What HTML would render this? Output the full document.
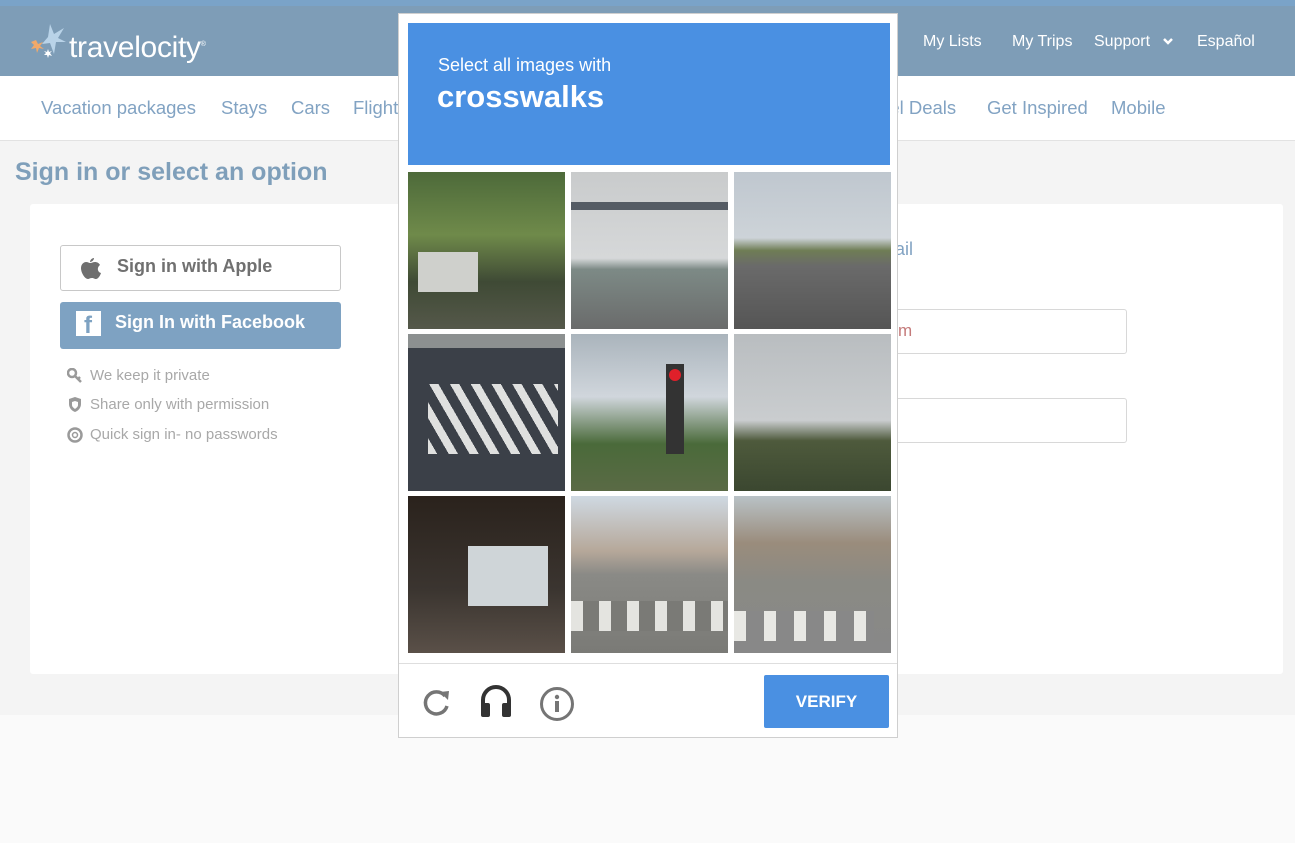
<!DOCTYPE html>
<html><head><meta charset="utf-8"><style>
*{margin:0;padding:0;box-sizing:border-box}
body{width:1295px;height:843px;overflow:hidden;background:#fafafa;font-family:"Liberation Sans",Arial,sans-serif;position:relative}
.a{position:absolute}
.top{left:0;top:0;width:1295px;height:6px;background:#7aa3c8}
.hdr{left:0;top:6px;width:1295px;height:70px;background:#7e9db7}
.nav{left:0;top:76px;width:1295px;height:65px;background:#fff;border-bottom:1px solid #e2e2e2}
.nav span{position:absolute;top:21px;font-size:18.5px;color:#82a3c3}
.hl{color:#fff;font-size:16px;top:33px}
.gray{left:0;top:141px;width:1295px;height:574px;background:#f4f4f4}
.card{left:30px;top:204px;width:1253px;height:470px;background:#fff;border-radius:3px}
.btn{border-radius:3px;font-size:18px;font-weight:bold}
.perk{font-size:15px;color:#a8a8a8;left:90px}
.inp{border:1px solid #d8d8d8;border-radius:3px;background:#fff}
.cap{left:398px;top:13px;width:500px;height:725px;background:#fff;border:1px solid #cfcfcf}
.t{position:absolute;width:157px;height:157px;overflow:hidden}
</style></head><body>
<div class="a top"></div>
<div class="a hdr"></div>
<svg class="a" style="left:28px;top:22px" width="45" height="42" viewBox="0 0 45 42">
<path d="M22 2 L26 12 L36 6 L30 16 L38 20 L28 20 L26 32 L22 21 L14 22 L20 15 Z" fill="#b9d3e8"/>
<path d="M8 18 L10 22 L15 20 L12 24 L16 27 L11 26 L9 31 L8 26 L3 27 L6 23 L3 20 Z" fill="#f1a96a"/>
<path d="M20 27 L21 30 L24 29 L22 31 L24 34 L21 33 L20 36 L19 33 L16 33 L18 31 L16 29 L19 30Z" fill="#fff"/>
</svg>
<div class="a" style="left:69px;top:31px;font-size:30px;color:#fff;letter-spacing:-0.3px">travelocity<sup style="font-size:7px">®</sup></div>
<div class="a hl" style="left:923px">My Lists</div>
<div class="a hl" style="left:1012px">My Trips</div>
<div class="a hl" style="left:1094px">Support</div>
<svg class="a" style="left:1162px;top:37px" width="12" height="9"><path d="M2 2 L6 6 L10 2" stroke="#fff" stroke-width="2.5" fill="none"/></svg>
<div class="a hl" style="left:1197px">Español</div>
<div class="a nav">
<span style="left:41px">Vacation packages</span><span style="left:221px">Stays</span><span style="left:291px">Cars</span><span style="left:353px">Flights</span><span style="left:853px">Travel Deals</span><span style="left:987px">Get Inspired</span><span style="left:1111px">Mobile</span>
</div>
<div class="a gray"></div>
<div class="a" style="left:15px;top:158px;font-size:25px;font-weight:bold;color:#7f9fba">Sign in or select an option</div>
<div class="a card"></div>
<div class="a btn" style="left:60px;top:245px;width:281px;height:46px;border:1px solid #c8c8c8;color:#707070;background:#fff">
<svg class="a" style="left:18px;top:10px" width="22" height="25" viewBox="0 0 22 25"><path d="M15 2c0 2-2 4-4 4 0-2 2-4 4-4zM11 7c2 0 3-1 5-1 2 0 4 1 5 3-3 2-3 7 1 8-1 3-3 6-5 6-2 0-2-1-4-1s-3 1-4 1c-3 0-7-6-7-11 0-4 3-6 5-6 2 0 3 1 4 1z" fill="#6f6f6f"/></svg>
<span class="a" style="left:56px;top:10px">Sign in with Apple</span></div>
<div class="a btn" style="left:60px;top:302px;width:281px;height:47px;background:#7ea2c2;color:#fff">
<div class="a" style="left:16px;top:9px;width:25px;height:25px;background:#fff"><span class="a" style="left:8px;top:1px;font-size:24px;color:#7ea2c2;font-weight:bold">f</span></div>
<span class="a" style="left:55px;top:10px">Sign In with Facebook</span></div>
<svg class="a" style="left:67px;top:368px" width="16" height="16"><circle cx="5" cy="5" r="4" fill="none" stroke="#9a9a9a" stroke-width="2.5"/><path d="M8 8 L14 14 M11 11 L13 9" stroke="#9a9a9a" stroke-width="2.5"/></svg>
<div class="a perk" style="top:367px">We keep it private</div>
<svg class="a" style="left:67px;top:396px" width="16" height="17"><path d="M8 1 L14 3 L14 8 C14 12 11 15 8 16 C5 15 2 12 2 8 L2 3Z" fill="#9a9a9a"/><path d="M8 5 L11 6 L11 9 C11 11 9 12 8 13 C7 12 5 11 5 9 L5 6Z" fill="#fff"/></svg>
<div class="a perk" style="top:396px">Share only with permission</div>
<svg class="a" style="left:67px;top:427px" width="16" height="16"><circle cx="8" cy="8" r="6.5" fill="none" stroke="#9a9a9a" stroke-width="2.5"/><circle cx="8" cy="8" r="2.5" fill="none" stroke="#9a9a9a" stroke-width="1.5"/></svg>
<div class="a perk" style="top:426px">Quick sign in- no passwords</div>
<div class="a" style="left:895px;top:239px;font-size:18px;color:#82a3c3">ail</div>
<div class="a inp" style="left:880px;top:309px;width:247px;height:45px"><span class="a" style="left:17px;top:11px;font-size:17px;color:#c47a7a">m</span></div>
<div class="a inp" style="left:880px;top:398px;width:247px;height:45px"></div>

<div class="a cap">
<div class="a" style="left:9px;top:9px;width:482px;height:142px;background:#4a90e2;color:#fff">
<div class="a" style="left:30px;top:32px;font-size:18px">Select all images with</div>
<div class="a" style="left:29px;top:56px;font-size:31px;font-weight:bold">crosswalks</div></div>
<div class="t" style="left:9px;top:158px;background:linear-gradient(180deg,#4d6a3a 0,#6f8a4a 40%,#3f4a35 70%,#55584a 100%)"><div class="a" style="left:10px;top:80px;width:60px;height:40px;background:#cfd0cc"></div></div>
<div class="t" style="left:172px;top:158px;background:linear-gradient(180deg,#c9cbcc 0,#d6d8d9 55%,#7d8a86 62%,#6a6b6b 100%)"><div class="a" style="left:0;top:30px;width:157px;height:8px;background:#555c64"></div></div>
<div class="t" style="left:335px;top:158px;background:linear-gradient(180deg,#bfc7cf 0,#cdd3d8 42%,#6f7d55 50%,#6a6a6a 60%,#555 100%)"></div>
<div class="t" style="left:9px;top:320px;background:#3b4048"><div class="a" style="left:20px;top:50px;width:130px;height:70px;background:repeating-linear-gradient(60deg,#dfe0df 0 8px,#3b4048 8px 18px)"></div><div class="a" style="left:0;top:0;width:157px;height:14px;background:#8c9090"></div></div>
<div class="t" style="left:172px;top:320px;background:linear-gradient(180deg,#aab4bc 0,#d0d6dc 40%,#4a6a3a 70%,#5a6a45 100%)"><div class="a" style="left:95px;top:30px;width:18px;height:90px;background:#333"></div><div class="a" style="left:98px;top:35px;width:12px;height:12px;border-radius:6px;background:#e0202a"></div></div>
<div class="t" style="left:335px;top:320px;background:linear-gradient(180deg,#b9bdc0 0,#cacdcf 55%,#4e5a3c 68%,#3b4730 100%)"></div>
<div class="t" style="left:9px;top:482px;background:linear-gradient(180deg,#2a221c 0,#3b3530 60%,#5a5048 100%)"><div class="a" style="left:60px;top:50px;width:80px;height:60px;background:#cfd5d8"></div></div>
<div class="t" style="left:172px;top:482px;background:linear-gradient(180deg,#cfd9e2 0,#b6a89a 35%,#8a8a86 50%,#7a7a76 100%)"><div class="a" style="left:0;top:105px;width:157px;height:30px;background:repeating-linear-gradient(90deg,#e4e4e0 0 12px,#7a7a76 12px 28px)"></div></div>
<div class="t" style="left:335px;top:482px;background:linear-gradient(180deg,#b9c2c6 0,#9a8c7c 30%,#8a8a84 55%,#888 100%)"><div class="a" style="left:0;top:115px;width:140px;height:30px;background:repeating-linear-gradient(90deg,#e8e8e4 0 12px,#888 12px 30px)"></div></div>
<div class="a" style="left:0;top:649px;width:498px;height:1px;background:#dedede"></div>
<svg class="a" style="left:22px;top:672px" width="32" height="32" viewBox="0 0 32 32"><path d="M24 10 A11 11 0 1 0 26 20" stroke="#757575" stroke-width="3.5" fill="none"/><path d="M19 6 L28 5 L27 14Z" fill="#757575"/></svg>
<svg class="a" style="left:80px;top:669px" width="34" height="36" viewBox="0 0 34 36"><path d="M4 22 V17 A13 13 0 0 1 30 17 V22" stroke="#333" stroke-width="4" fill="none"/><rect x="2" y="20" width="9" height="14" rx="2" fill="#333"/><rect x="23" y="20" width="9" height="14" rx="2" fill="#333"/></svg>
<svg class="a" style="left:140px;top:672px" width="36" height="36" viewBox="0 0 36 36"><circle cx="18" cy="18" r="15.5" stroke="#757575" stroke-width="3" fill="none"/><rect x="16" y="15" width="4" height="11" fill="#757575"/><circle cx="18" cy="11" r="2.2" fill="#757575"/></svg>
<div class="a" style="left:365px;top:661px;width:125px;height:53px;background:#4a90e2;border-radius:2px;color:#fff;font-weight:bold;font-size:17px;text-align:center;line-height:53px">VERIFY</div>
</div>
</body></html>
